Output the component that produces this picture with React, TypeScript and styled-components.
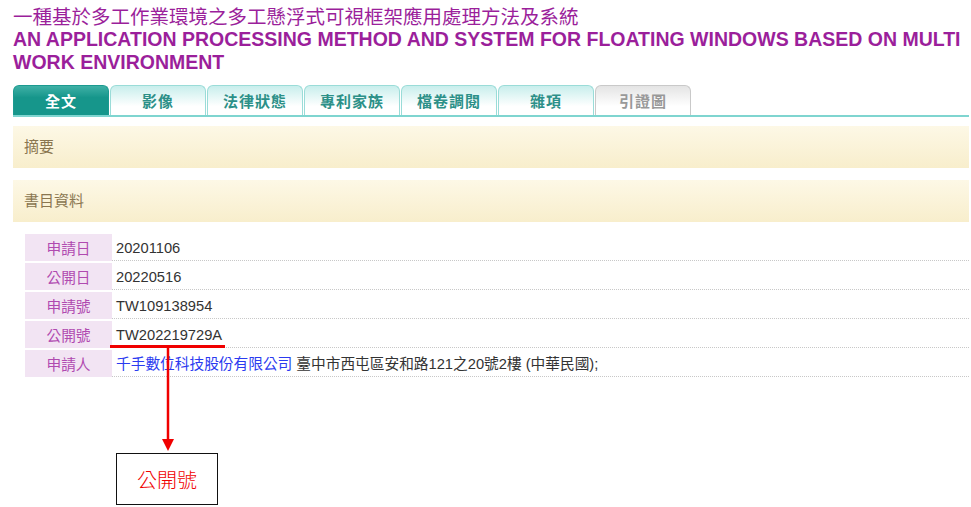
import styled, { createGlobalStyle } from "styled-components";

const GlobalStyle = createGlobalStyle`
  body {
    margin: 0;
    background: #fff;
    font-family: "Liberation Sans", Arial, "Noto Sans CJK TC", sans-serif;
  }
`;

const Page = styled.div`
  position: relative;
  width: 971px;
  height: 507px;
  padding: 4px 2px 0 13px;
  box-sizing: border-box;
  overflow: hidden;
`;

const TitleZh = styled.div`
  font-family: "Noto Sans CJK TC", sans-serif;
  font-size: 19.5px;
  line-height: 24px;
  color: #9b1f9b;
`;

const TitleEn = styled.div`
  font-size: 19.5px;
  font-weight: bold;
  line-height: 22.5px;
  color: #9b1f9b;
  white-space: nowrap;
`;

const Tabs = styled.div`
  display: flex;
  gap: 1px;
  margin-top: 12px;
  height: 30px;
  border-bottom: 2px solid #7fd5d0;
`;

const Tab = styled.div<{ $state: "active" | "normal" | "off" }>`
  width: 96px;
  height: 30px;
  box-sizing: border-box;
  border-radius: 6px 6px 0 0;
  display: flex;
  align-items: center;
  justify-content: center;
  font-family: "Noto Sans CJK TC", sans-serif;
  font-size: 15px;
  line-height: 1;
  font-weight: bold;
  letter-spacing: 1px;
  border: 1px solid
    ${({ $state }) =>
      $state === "active" ? "#1c9a90" : $state === "off" ? "#c9c9c9" : "#9adcd8"};
  border-bottom: none;
  color: ${({ $state }) =>
    $state === "active" ? "#fff" : $state === "off" ? "#999" : "#2c9088"};
  background: ${({ $state }) =>
    $state === "active"
      ? "linear-gradient(#3fb0a6, #16968b 40%, #16968b)"
      : $state === "off"
      ? "linear-gradient(#e4e4e4, #fff 70%)"
      : "linear-gradient(#c8eeec, #fff 70%)"};
`;

const Section = styled.div`
  height: 42px;
  margin-top: 9px;
  display: flex;
  align-items: center;
  padding: 0 0 3px 11px;
  box-sizing: border-box;
  font-family: "Noto Sans CJK TC", sans-serif;
  font-size: 15px;
  line-height: 1;
  color: #8a7650;
  background: linear-gradient(#fdf8e6, #f8eecc);
  & + & {
    margin-top: 12px;
  }
`;

const Table = styled.div`
  display: flex;
  flex-direction: column;
  gap: 2px;
  margin: 12px 0 0 12px;
`;

const Row = styled.div`
  display: flex;
  height: 27px;
`;

const Label = styled.div`
  width: 87px;
  display: flex;
  align-items: center;
  justify-content: center;
  padding-top: 2px;
  box-sizing: border-box;
  background: #f2e4f3;
  color: #b04ab0;
  font-family: "Noto Sans CJK TC", sans-serif;
  font-size: 14.7px;
  line-height: 1;
`;

const Value = styled.div`
  flex: 1;
  display: flex;
  align-items: center;
  padding: 3px 0 0 4px;
  border-bottom: 1px dotted #c8c8c8;
  font-size: 14.7px;
  line-height: 1;
  color: #333;
  white-space: pre;
`;

const Link = styled.span`
  color: #2b3bf0;
`;

const Underline = styled.div`
  position: absolute;
  left: 110px;
  top: 345px;
  width: 115px;
  height: 3px;
  background: #f00000;
`;

const Arrow = styled.svg`
  position: absolute;
  left: 160px;
  top: 347px;
`;

const Callout = styled.div`
  position: absolute;
  left: 116px;
  top: 453px;
  width: 102px;
  height: 52px;
  box-sizing: border-box;
  border: 1.5px solid #111;
  display: flex;
  align-items: center;
  justify-content: center;
  color: #f00000;
  font-family: "Noto Sans CJK TC", sans-serif;
  font-size: 20px;
  font-weight: 300;
`;

const tabs: { name: string; state: "active" | "normal" | "off" }[] = [
  { name: "全文", state: "active" },
  { name: "影像", state: "normal" },
  { name: "法律狀態", state: "normal" },
  { name: "專利家族", state: "normal" },
  { name: "檔卷調閱", state: "normal" },
  { name: "雜項", state: "normal" },
  { name: "引證圖", state: "off" },
];

const rows = [
  { label: "申請日", value: "20201106" },
  { label: "公開日", value: "20220516" },
  { label: "申請號", value: "TW109138954" },
  { label: "公開號", value: "TW202219729A" },
];

export default function App() {
  return (
    <>
      <GlobalStyle />
      <Page>
        <TitleZh>一種基於多工作業環境之多工懸浮式可視框架應用處理方法及系統</TitleZh>
        <TitleEn>
          AN APPLICATION PROCESSING METHOD AND SYSTEM FOR FLOATING WINDOWS BASED ON MULTI
          <br />
          WORK ENVIRONMENT
        </TitleEn>
        <Tabs>
          {tabs.map((t) => (
            <Tab key={t.name} $state={t.state}>
              {t.name}
            </Tab>
          ))}
        </Tabs>
        <Section>摘要</Section>
        <Section>書目資料</Section>
        <Table>
          {rows.map((r) => (
            <Row key={r.label}>
              <Label>{r.label}</Label>
              <Value>{r.value}</Value>
            </Row>
          ))}
          <Row>
            <Label>申請人</Label>
            <Value>
              <Link>千手數位科技股份有限公司</Link> 臺中市西屯區安和路121之20號2樓 (中華民國);
            </Value>
          </Row>
        </Table>

        <Underline />
        <Arrow width="16" height="106" viewBox="0 0 16 106">
          <line x1="8" y1="0" x2="8" y2="94" stroke="#f00000" strokeWidth="2.5" />
          <polygon points="2,92 14,92 8,104" fill="#f00000" />
        </Arrow>
        <Callout>公開號</Callout>
      </Page>
    </>
  );
}
